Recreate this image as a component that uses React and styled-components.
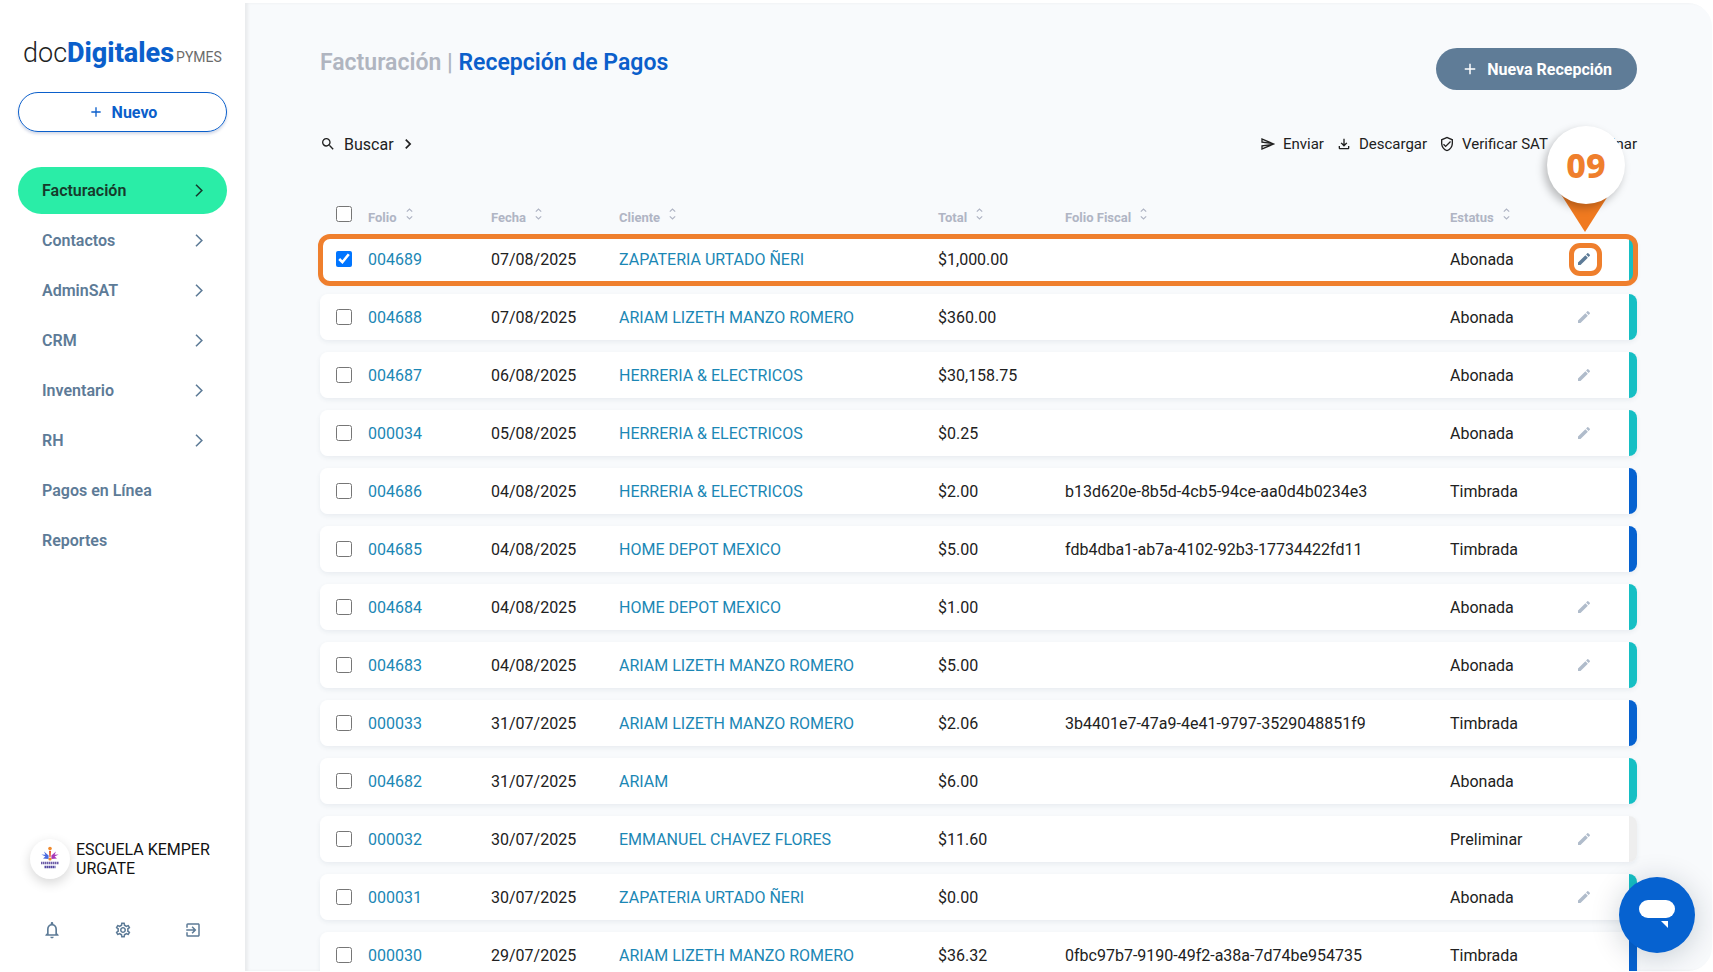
import React, { useState } from 'react'
import styled, { createGlobalStyle } from 'styled-components'
import {
  MdAdd,
  MdEdit,
  MdSearch,
  MdChevronRight,
  MdOutlineSend,
  MdOutlineFileDownload,
  MdOutlineVerifiedUser,
  MdDeleteOutline,
  MdNotificationsNone,
  MdOutlineSettings,
  MdExitToApp,
} from 'react-icons/md'

const menu = [
  { label: 'Facturación', sub: true },
  { label: 'Contactos', sub: true },
  { label: 'AdminSAT', sub: true },
  { label: 'CRM', sub: true },
  { label: 'Inventario', sub: true },
  { label: 'RH', sub: true },
  { label: 'Pagos en Línea' },
  { label: 'Reportes' },
]

const columns = ['Folio', 'Fecha', 'Cliente', 'Total', 'Folio Fiscal', 'Estatus']

const payments = [
  { folio: '004689', date: '07/08/2025', client: 'ZAPATERIA URTADO ÑERI', total: '$1,000.00', uuid: '', status: 'Abonada', edit: true },
  { folio: '004688', date: '07/08/2025', client: 'ARIAM LIZETH MANZO ROMERO', total: '$360.00', uuid: '', status: 'Abonada', edit: true },
  { folio: '004687', date: '06/08/2025', client: 'HERRERIA & ELECTRICOS', total: '$30,158.75', uuid: '', status: 'Abonada', edit: true },
  { folio: '000034', date: '05/08/2025', client: 'HERRERIA & ELECTRICOS', total: '$0.25', uuid: '', status: 'Abonada', edit: true },
  { folio: '004686', date: '04/08/2025', client: 'HERRERIA & ELECTRICOS', total: '$2.00', uuid: 'b13d620e-8b5d-4cb5-94ce-aa0d4b0234e3', status: 'Timbrada' },
  { folio: '004685', date: '04/08/2025', client: 'HOME DEPOT MEXICO', total: '$5.00', uuid: 'fdb4dba1-ab7a-4102-92b3-17734422fd11', status: 'Timbrada' },
  { folio: '004684', date: '04/08/2025', client: 'HOME DEPOT MEXICO', total: '$1.00', uuid: '', status: 'Abonada', edit: true },
  { folio: '004683', date: '04/08/2025', client: 'ARIAM LIZETH MANZO ROMERO', total: '$5.00', uuid: '', status: 'Abonada', edit: true },
  { folio: '000033', date: '31/07/2025', client: 'ARIAM LIZETH MANZO ROMERO', total: '$2.06', uuid: '3b4401e7-47a9-4e41-9797-3529048851f9', status: 'Timbrada' },
  { folio: '004682', date: '31/07/2025', client: 'ARIAM', total: '$6.00', uuid: '', status: 'Abonada' },
  { folio: '000032', date: '30/07/2025', client: 'EMMANUEL CHAVEZ FLORES', total: '$11.60', uuid: '', status: 'Preliminar', edit: true },
  { folio: '000031', date: '30/07/2025', client: 'ZAPATERIA URTADO ÑERI', total: '$0.00', uuid: '', status: 'Abonada', edit: true },
  { folio: '000030', date: '29/07/2025', client: 'ARIAM LIZETH MANZO ROMERO', total: '$36.32', uuid: '0fbc97b7-9190-49f2-a38a-7d74be954735', status: 'Timbrada' },
]

const statusColors = {
  Abonada: '#16bfc4',
  Timbrada: '#0662d0',
  Preliminar: '#eeeeee',
}

const Arrow = () => (
  <svg width="8" height="13" viewBox="0 0 8 13" fill="none" stroke="currentColor" strokeWidth="1.6" aria-hidden="true">
    <path d="M1 0.8 6.8 6.5 1 12.2" />
  </svg>
)

const SchoolLogo = () => (
  <svg width="20" height="26" viewBox="0 0 20 26" aria-hidden="true">
    <circle cx="10" cy="2.6" r="1.8" fill="#f08a2c" />
    <path d="M9 5h2l-.4 6H9.400z" fill="#e8572e" />
    <path d="M8.6 13 3 12.400 5.400 10.600 1.400 8.400l4 .4L4 5.400 8.600 9.400z" fill="#4a6be0" />
    <path d="M11.400 13l5.600-.6-2.400-1.800 4-2.200-4 .4L16 5.400l-4.600 4z" fill="#a83ab8" />
    <circle cx="10" cy="13" r="1.6" fill="#f08a2c" />
    <path d="M1 17h18" stroke="#6b5ba6" strokeWidth="2.4" strokeDasharray="1.5 .5" />
    <path d="M4.5 21h11" stroke="#5348a0" strokeWidth="2.4" strokeDasharray="1.6 .4" />
  </svg>
)

const App = () => {
  const [selected, setSelected] = useState(['004689'])

  const toggle = (folio) => {
    setSelected(selected.includes(folio) ? selected.filter((f) => f !== folio) : [...selected, folio])
  }

  return (
    <Page>
      <GlobalStyle />
      <Sidebar>
        <Logo href="#">
          <LogoLight>doc</LogoLight>
          <LogoBold>Digitales</LogoBold>
          <LogoPlan>PYMES</LogoPlan>
        </Logo>
        <NewButton type="button">
          <MdAdd size={16} />
          Nuevo
        </NewButton>
        <Menu>
          {menu.map((item, i) => (
            <MenuItem key={item.label} href="#" $active={i === 0}>
              {item.label}
              {item.sub && <Arrow />}
            </MenuItem>
          ))}
        </Menu>
        <Account>
          <Avatar>
            <SchoolLogo />
          </Avatar>
          <AccountName>ESCUELA KEMPER URGATE</AccountName>
        </Account>
        <AccountActions>
          <IconButton type="button" aria-label="Notificaciones"><MdNotificationsNone size={20} /></IconButton>
          <IconButton type="button" aria-label="Configuración"><MdOutlineSettings size={18} /></IconButton>
          <IconButton type="button" aria-label="Salir"><MdExitToApp size={18} /></IconButton>
        </AccountActions>
      </Sidebar>

      <Main>
        <Header>
          <Title>
            Facturación | <TitleCurrent>Recepción de Pagos</TitleCurrent>
          </Title>
          <ReceptionButton type="button">
            <MdAdd size={18} />
            Nueva Recepción
          </ReceptionButton>
        </Header>

        <Toolbar>
          <SearchButton type="button">
            <MdSearch size={16} />
            Buscar
            <SearchArrow size={20} />
          </SearchButton>
          <Tools>
            <ToolButton type="button"><MdOutlineSend size={16} />Enviar</ToolButton>
            <ToolButton type="button"><MdOutlineFileDownload size={16} />Descargar</ToolButton>
            <ToolButton type="button"><MdOutlineVerifiedUser size={16} />Verificar SAT</ToolButton>
            <ToolButton type="button"><MdDeleteOutline size={16} />Eliminar</ToolButton>
          </Tools>
        </Toolbar>

        <Table>
          <colgroup>
            <Col $w={48} />
            <Col $w={123} />
            <Col $w={128} />
            <Col />
            <Col $w={127} />
            <Col $w={385} />
            <Col $w={126} />
            <Col $w={61} />
          </colgroup>
          <thead>
            <tr>
              <HeadCell><Check aria-label="Seleccionar todo" /></HeadCell>
              {columns.map((name) => (
                <HeadCell key={name}>
                  <SortButton type="button">
                    {name}
                    <SortIcon width="7" height="12" viewBox="0 0 7 12" aria-hidden="true">
                      <path d="M0.8 3.6 3.5 1 6.2 3.6M0.8 8.4 3.5 11 6.2 8.4" />
                    </SortIcon>
                  </SortButton>
                </HeadCell>
              ))}
              <HeadCell />
            </tr>
          </thead>
          <tbody>
            {payments.map((p, i) => (
              <Row key={p.folio} $marked={i === 0}>
                <Cell>
                  <Check
                    aria-label={`Seleccionar ${p.folio}`}
                    checked={selected.includes(p.folio)}
                    onChange={() => toggle(p.folio)}
                  />
                </Cell>
                <Cell><CellLink href="#">{p.folio}</CellLink></Cell>
                <Cell>{p.date}</Cell>
                <Cell><CellLink href="#">{p.client}</CellLink></Cell>
                <Cell>{p.total}</Cell>
                <Cell>{p.uuid}</Cell>
                <Cell>{p.status}</Cell>
                <StatusCell $color={statusColors[p.status]}>
                  {p.edit && (
                    <EditButton type="button" aria-label={`Editar ${p.folio}`} $marked={i === 0}>
                      <MdEdit size={16} />
                      {i === 0 && (
                        <Pin>
                          <PinTip width="56" height="44" viewBox="0 0 56 44" aria-hidden="true">
                            <path d="M0 0h56L28 44z" fill="#f07a20" />
                          </PinTip>
                          <PinNumber>09</PinNumber>
                        </Pin>
                      )}
                    </EditButton>
                  )}
                </StatusCell>
              </Row>
            ))}
          </tbody>
        </Table>
      </Main>

      <ChatButton type="button" aria-label="Abrir chat">
        <svg width="36" height="30" viewBox="0 0 36 30" fill="#fff" aria-hidden="true">
          <rect width="36" height="18" rx="9" />
          <path d="M22 21h7v7z" />
        </svg>
      </ChatButton>
    </Page>
  )
}

export default App

const GlobalStyle = createGlobalStyle`
  * {
    box-sizing: border-box;
  }
  body {
    margin: 0;
    background: #fff;
    color: #212121;
    font-family: Roboto, 'Liberation Sans', sans-serif;
    font-size: 16px;
  }
  button {
    font: inherit;
    color: inherit;
    background: none;
    border: 0;
    padding: 0;
    cursor: pointer;
  }
  a {
    text-decoration: none;
  }
`
const Page = styled.div`
  display: flex;
  height: 100vh;
  overflow: hidden;
`
const Sidebar = styled.aside`
  display: flex;
  flex-direction: column;
  flex: none;
  width: 245px;
  padding: 33px 18px 32px;
`
const Logo = styled.a`
  display: flex;
  align-items: baseline;
  height: 40px;
  padding-left: 5px;
  line-height: 40px;
`
const LogoLight = styled.span`
  color: #222;
  font-size: 27px;
  font-weight: 300;
`
const LogoBold = styled.span`
  color: #0b5fcb;
  font-size: 27px;
  font-weight: 800;
`
const LogoPlan = styled.span`
  margin-left: 2px;
  color: #6b6b6b;
  font-size: 14px;
`
const NewButton = styled.button`
  display: flex;
  align-items: center;
  justify-content: center;
  gap: 8px;
  height: 40px;
  margin-top: 19px;
  border: 1px solid #0b5fcb;
  border-radius: 20px;
  color: #0b5fcb;
  font-weight: 700;
  box-shadow: 0 2px 3px rgba(0, 40, 120, 0.18);
`
const Menu = styled.nav`
  display: flex;
  flex-direction: column;
  gap: 3px;
  margin-top: 35px;
`
const MenuItem = styled.a`
  display: flex;
  align-items: center;
  justify-content: space-between;
  height: 47px;
  padding: 0 24px;
  border-radius: 24px;
  color: ${(props) => (props.$active ? '#173a2c' : '#5d7b97')};
  background: ${(props) => (props.$active ? '#2aeda7' : 'transparent')};
  font-weight: 600;
`
const Account = styled.div`
  display: flex;
  align-items: center;
  gap: 6px;
  margin-top: auto;
  padding-left: 12px;
`
const Avatar = styled.div`
  display: flex;
  align-items: center;
  justify-content: center;
  flex: none;
  width: 40px;
  height: 40px;
  border-radius: 50%;
  background: #fff;
  box-shadow: 0 4px 12px rgba(0, 0, 0, 0.16);
`
const AccountName = styled.span`
  color: #111;
  line-height: 19px;
`
const AccountActions = styled.div`
  display: flex;
  justify-content: space-between;
  padding: 0 24px;
  margin-top: 41px;
`
const IconButton = styled.button`
  display: flex;
  align-items: center;
  justify-content: center;
  width: 20px;
  height: 20px;
  color: #5d7b97;
`
const Main = styled.main`
  flex: 1;
  min-width: 0;
  margin: 3px 1px 1px 0;
  padding: 45px 75px 0 75px;
  border-radius: 0 24px 24px 0;
  background: #f8fafc;
  box-shadow: inset 3px 0 3px rgba(0, 0, 0, 0.06);
  overflow: hidden;
`
const Header = styled.header`
  display: flex;
  align-items: flex-start;
  justify-content: space-between;
`
const Title = styled.h1`
  margin: 0;
  color: #b0b5c0;
  font-size: 23px;
  font-weight: 600;
  line-height: 30px;
`
const TitleCurrent = styled.span`
  color: #0b5fcb;
`
const ReceptionButton = styled.button`
  display: flex;
  align-items: center;
  gap: 8px;
  height: 42px;
  padding: 0 25px;
  border-radius: 21px;
  background: #5f7c97;
  color: #fff;
  font-weight: 700;
`
const Toolbar = styled.div`
  display: flex;
  justify-content: space-between;
  margin-top: 42px;
`
const Tools = styled.div`
  display: flex;
  gap: 12px;
`
const ToolButton = styled.button`
  display: flex;
  align-items: center;
  gap: 7px;
  height: 24px;
  font-size: 15px;
`
const SearchButton = styled(ToolButton)`
  gap: 8px;
  font-size: 16px;
`
const SearchArrow = styled(MdChevronRight)`
  margin-left: -4px;
`
const Table = styled.table`
  width: 100%;
  margin-top: 36px;
  table-layout: fixed;
  border-collapse: separate;
  border-spacing: 0 12px;
`
const Col = styled.col`
  width: ${(props) => (props.$w ? `${props.$w}px` : 'auto')};
`
const HeadCell = styled.th`
  height: 20px;
  padding: 0;
  text-align: left;
  vertical-align: middle;
`
const SortButton = styled.button`
  display: flex;
  align-items: flex-end;
  gap: 9px;
  height: 20px;
  color: #b0b5c4;
  font-size: 13px;
  font-weight: 700;
  line-height: 13px;
`
const SortIcon = styled.svg`
  margin-bottom: 4px;
  fill: none;
  stroke: currentColor;
  stroke-width: 1.2;
`
const Check = styled.input.attrs({ type: 'checkbox' })`
  display: block;
  width: 16px;
  height: 16px;
  margin: 0 0 0 16px;
`
// the frame hangs from the first cell, a pseudo element of the tr would count as one more column
const Row = styled.tr`
  position: relative;
  border-radius: 8px;
  box-shadow: 0 2px 5px rgba(30, 50, 80, 0.07);

  & > td:first-child::after {
    content: '';
    display: ${(props) => (props.$marked ? 'block' : 'none')};
    position: absolute;
    inset: -2px -1px -4px -2px;
    border: 5px solid #ef7f2d;
    border-radius: 12px;
    pointer-events: none;
    z-index: 1;
  }
`
const Cell = styled.td`
  height: 46px;
  padding: 0;
  background: #fff;
  white-space: nowrap;

  &:first-child {
    border-radius: 8px 0 0 8px;
  }
`
const StatusCell = styled(Cell)`
  border-right: 8px solid ${(props) => props.$color};
  border-radius: 0 8px 8px 0;
`
const CellLink = styled.a`
  color: #1b87b5;
`
const EditButton = styled.button`
  position: relative;
  display: flex;
  align-items: center;
  justify-content: center;
  width: 16px;
  height: 16px;
  color: ${(props) => (props.$marked ? '#5d7b97' : '#b0bccb')};

  &::before {
    content: '';
    display: ${(props) => (props.$marked ? 'block' : 'none')};
    position: absolute;
    inset: -8px -10px -9px -7px;
    border: 5px solid #ef7f2d;
    border-radius: 11px;
  }
`
const Pin = styled.span`
  position: absolute;
  left: -29px;
  bottom: 35px;
  z-index: 2;
  width: 78px;
  height: 106px;
`
const PinTip = styled.svg`
  position: absolute;
  left: 10px;
  bottom: 0;
`
const PinNumber = styled.span`
  position: absolute;
  inset: 0 0 auto 0;
  display: flex;
  align-items: center;
  justify-content: center;
  height: 78px;
  border-radius: 50%;
  background: #fff;
  color: #ef7f2d;
  font-family: 'Noto Sans', sans-serif;
  font-size: 34px;
  font-weight: 800;
  box-shadow: -3px 4px 8px rgba(0, 0, 0, 0.25);
`
const ChatButton = styled.button`
  position: fixed;
  right: 18px;
  bottom: 19px;
  display: flex;
  align-items: center;
  justify-content: center;
  width: 76px;
  height: 76px;
  border-radius: 50%;
  background: #0662d0;
  box-shadow: 0 4px 30px rgba(0, 30, 50, 0.2);
`
